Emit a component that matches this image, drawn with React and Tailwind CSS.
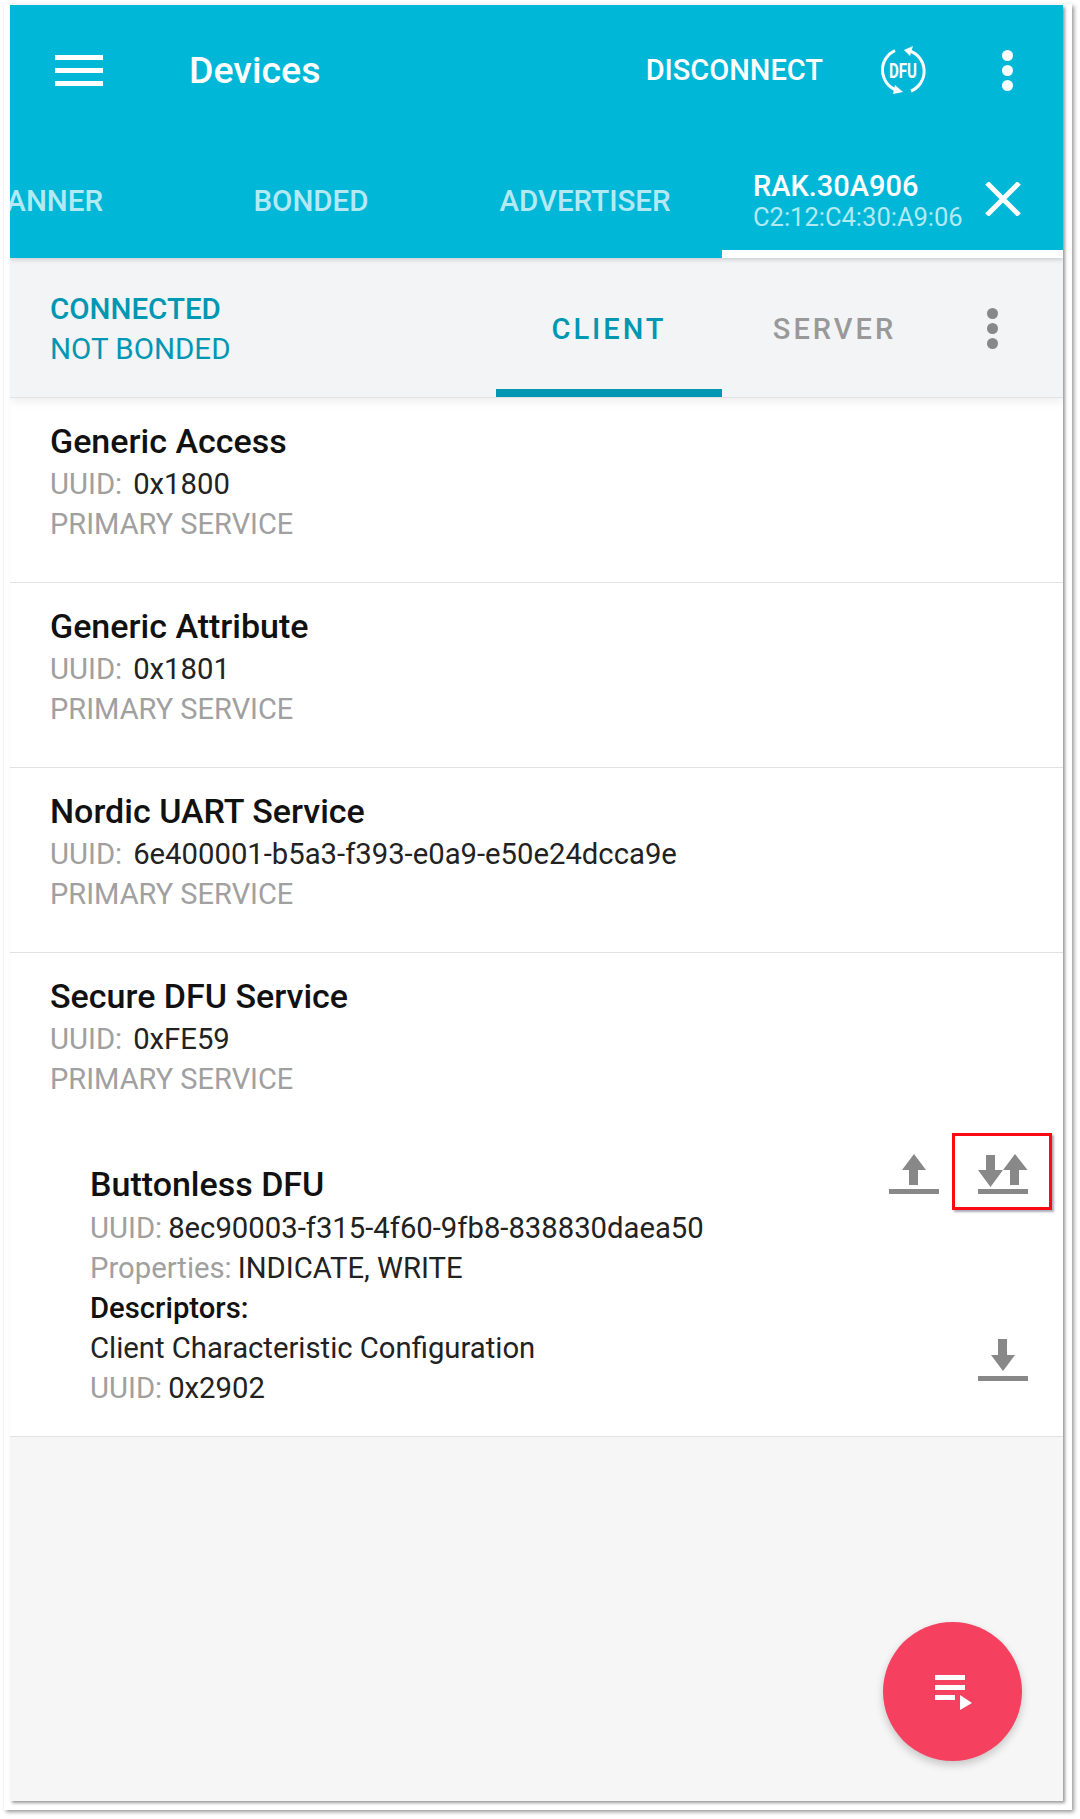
import React from 'react';

const services = [
  { name: 'Generic Access', uuid: '0x1800' },
  { name: 'Generic Attribute', uuid: '0x1801' },
  { name: 'Nordic UART Service', uuid: '6e400001-b5a3-f393-e0a9-e50e24dcca9e' },
];

const UploadIcon = () => (
  <svg width="50" height="42" viewBox="0 0 50 42" fill="#888888">
    <path d="M25 1L37 17H29V32H20V17H13Z" />
    <rect x="0" y="36" width="50" height="5" />
  </svg>
);

const BothIcon = () => (
  <svg width="50" height="42" viewBox="0 0 50 42" fill="#888888">
    <path d="M8 2H17V17H25L12.500 34L0 17H8Z" />
    <path d="M37 1L49.500 17H41V32H32V17H25Z" />
    <rect x="0" y="36" width="50" height="5" />
  </svg>
);

const DownloadIcon = () => (
  <svg width="50" height="42" viewBox="0 0 50 42" fill="#888888">
    <path d="M20 0H29V16H37L25 32L13 16H20Z" />
    <rect x="0" y="37" width="50" height="5" />
  </svg>
);

const DfuIcon = () => (
  <svg width="50" height="50" viewBox="0 0 50 50" fill="none">
    <path d="M17 4.500A21.500 21.500 0 0 0 18 44" stroke="white" strokeWidth="3" />
    <path d="M33 45A21.500 21.500 0 0 0 32 5" stroke="white" strokeWidth="3" />
    <path d="M26 4L35 0L32 10Z" fill="white" />
    <path d="M25 46L15 48L17 39Z" fill="white" />
    <text x="25" y="32" textAnchor="middle" fill="white" fontFamily="Roboto, sans-serif" fontWeight="700" fontSize="21" textLength="28" lengthAdjust="spacingAndGlyphs">DFU</text>
  </svg>
);

const Dots = ({ color }) => (
  <div className="flex flex-col gap-[4px]">
    <div className={`w-[11px] h-[11px] rounded-full ${color}`} />
    <div className={`w-[11px] h-[11px] rounded-full ${color}`} />
    <div className={`w-[11px] h-[11px] rounded-full ${color}`} />
  </div>
);

const Service = ({ name, uuid }) => (
  <div className="h-[185px] border-b border-[#e2e2e2] bg-white pl-[40px] pt-[21px]">
    <div className="h-[45px] text-[34px] leading-[44px] font-medium text-[#111]">{name}</div>
    <div className="h-[40px] text-[29.25px] leading-[40px]">
      <span className="text-[#a0a0a0]">UUID:</span>
      <span className="ml-[11px] text-[#222]">{uuid}</span>
    </div>
    <div className="h-[40px] text-[29px] leading-[40px] text-[#a0a0a0]">PRIMARY SERVICE</div>
  </div>
);

export default function App() {
  return (
    <div className="w-[1080px] h-[1819px] bg-white font-['Roboto',sans-serif] pt-[4px] pl-[4px]">
      <div className="w-[1068px] h-[1806px] bg-white pt-[1px] pl-[6px] shadow-[2px_2px_4px_#999]">
        <div className="relative w-[1053px] h-[1796px] bg-[#f6f6f6] overflow-hidden shadow-[2px_2px_3px_#999]">
          <div className="relative z-20 h-[253px] bg-[#00b7d8] text-white shadow-[0_2px_4px_rgba(0,0,0,0.15)]">
            <div className="h-[115px] pt-[16px] flex items-center">
              <div className="ml-[45px] flex flex-col gap-[8px] w-[48px]">
                <div className="h-[5px] bg-white" />
                <div className="h-[5px] bg-white" />
                <div className="h-[5px] bg-white" />
              </div>
              <div className="ml-[86px] text-[37.5px] font-medium">Devices</div>
              <div className="ml-auto text-[29px] font-medium">DISCONNECT</div>
              <div className="ml-[55px]"><DfuIcon /></div>
              <div className="ml-[74px] mr-[50px]"><Dots color="bg-white" /></div>
            </div>
            <div className="h-[138px] flex text-[29.500px] font-medium text-[#b3e9f3]">
              <div className="w-[93px] pt-[59px] overflow-hidden flex justify-end">
                <span className="whitespace-nowrap">SCANNER</span>
              </div>
              <div className="ml-[98px] w-[220px] pt-[59px] text-center">BONDED</div>
              <div className="ml-[59px] w-[210px] pt-[59px] text-center">ADVERTISER</div>
              <div className="ml-[32px] flex-1 border-b-[8px] border-white flex items-start pl-[31px] pt-[48px]">
                <div>
                  <div className="text-[29px] leading-[36px] text-white">RAK.30A906</div>
                  <div className="text-[25.500px] leading-[26px] font-normal text-[#b3e9f3]">C2:12:C4:30:A9:06</div>
                </div>
                <svg className="ml-[22px] mt-[14px]" width="36" height="34" viewBox="0 0 36 34" fill="none">
                  <path d="M2 1L34 33M34 1L2 33" stroke="white" strokeWidth="5" />
                </svg>
              </div>
            </div>
          </div>
          <div className="relative z-10 h-[140px] bg-[#f3f4f6] flex items-stretch border-b border-[#e2e2e2] shadow-[0_3px_10px_rgba(0,0,0,0.08)]">
            <div className="w-[486px] pl-[40px] pt-[31px] text-[29.500px] leading-[40px] text-[#0097b2]">
              <div className="font-medium">CONNECTED</div>
              <div>NOT BONDED</div>
            </div>
            <div className="w-[226px] border-b-[8px] border-[#0097b2] text-center pt-[50px] text-[29px] font-medium tracking-[3px] text-[#0097b2]">CLIENT</div>
            <div className="w-[222px] pl-[3px] text-center pt-[50px] text-[29px] font-medium tracking-[3px] text-[#999]">SERVER</div>
            <div className="pt-[50px] ml-[43px]"><Dots color="bg-[#888]" /></div>
          </div>
          {services.map((s) => <Service key={s.name} name={s.name} uuid={s.uuid} />)}
          <div className="h-[484px] bg-white border-b border-[#e2e2e2] pt-[21px]">
            <div className="pl-[40px]">
              <div className="h-[45px] text-[34px] leading-[44px] font-medium text-[#111]">Secure DFU Service</div>
              <div className="h-[40px] text-[29.25px] leading-[40px]">
                <span className="text-[#a0a0a0]">UUID:</span>
                <span className="ml-[11px] text-[#222]">0xFE59</span>
              </div>
              <div className="h-[40px] text-[29px] leading-[40px] text-[#a0a0a0]">PRIMARY SERVICE</div>
            </div>
            <div className="flex justify-between pl-[80px] pr-[35px]">
              <div className="pt-[63px]">
                <div className="h-[46px] text-[34px] leading-[44px] font-medium text-[#111]">Buttonless DFU</div>
                <div className="h-[40px] text-[29.25px] leading-[40px]">
                  <span className="text-[#a0a0a0]">UUID:</span>
                  <span className="ml-[6px] text-[#222]">8ec90003-f315-4f60-9fb8-838830daea50</span>
                </div>
                <div className="h-[40px] text-[29.25px] leading-[40px]">
                  <span className="text-[#a0a0a0]">Properties:</span>
                  <span className="ml-[6px] text-[#222]">INDICATE, WRITE</span>
                </div>
                <div className="h-[40px] text-[29.25px] leading-[40px] font-medium text-[#111]">Descriptors:</div>
                <div className="h-[40px] text-[29.25px] leading-[40px] text-[#222]">Client Characteristic Configuration</div>
                <div className="h-[40px] text-[29.25px] leading-[40px]">
                  <span className="text-[#a0a0a0]">UUID:</span>
                  <span className="ml-[6px] text-[#222]">0x2902</span>
                </div>
              </div>
              <div className="flex flex-col justify-between items-end pt-[54px] pb-[27px]">
                <div className="flex gap-[39px]">
                  <UploadIcon />
                  <BothIcon />
                </div>
                <DownloadIcon />
              </div>
            </div>
          </div>
          <div className="absolute z-30 left-[873px] top-[1617px] w-[139px] h-[139px] rounded-full bg-[#f64060] shadow-[0_4px_8px_rgba(0,0,0,0.2)] flex items-center justify-center">
            <svg className="mt-[3px]" width="38" height="36" viewBox="0 0 38 36" fill="white">
              <rect x="1" y="0" width="30" height="5" />
              <rect x="1" y="10" width="30" height="5" />
              <rect x="1" y="20" width="20" height="5" />
              <path d="M26 20L38 28L26 35Z" />
            </svg>
          </div>
          <div className="absolute z-30 left-[942px] top-[1128px] w-[100px] h-[77px] border-[3px] border-[#fb0a14] shadow-[2px_2px_2px_#aab]" />
        </div>
      </div>
    </div>
  );
}
